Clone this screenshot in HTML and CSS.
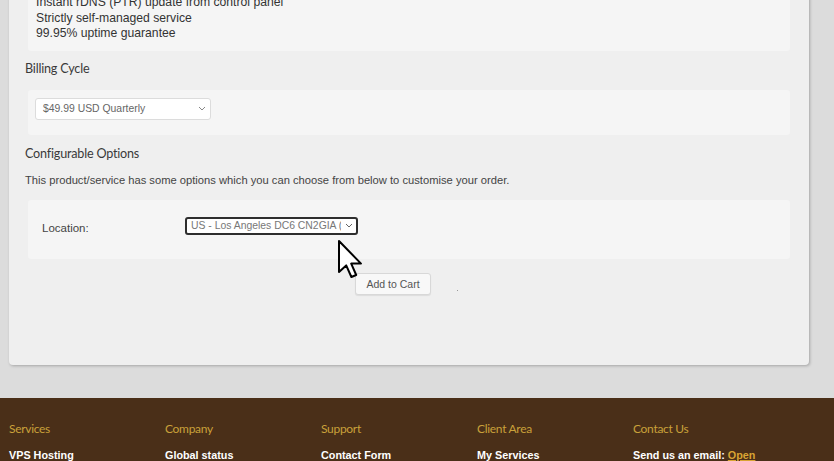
FILE: index.html
```html
<!DOCTYPE html>
<html lang="en">
<head>
    <meta charset="UTF-8">
    <meta name="viewport" content="width=device-width, initial-scale=1.0">
    <title>Configure</title>
    <link rel="stylesheet" href="styles.css">
</head>
<body>
    <div class="panel">
        <div class="box features">
            <div>Instant rDNS (PTR) update from control panel</div>
            <div>Strictly self-managed service</div>
            <div>99.95% uptime guarantee</div>
        </div>

        <h3 class="section-title">Billing Cycle</h3>
        <div class="box billing">
            <div class="select select-billing">
                <span>$49.99 USD Quarterly</span>
                <svg class="chev" width="8" height="5" viewBox="0 0 8 5"><path d="M1 1 L4 4 L7 1" fill="none" stroke="#888" stroke-width="1"/></svg>
            </div>
        </div>

        <h3 class="section-title">Configurable Options</h3>
        <p class="desc">This product/service has some options which you can choose from below to customise your order.</p>
        <div class="box options">
            <label class="opt-label">Location:</label>
            <div class="select select-location">
                <span class="sel-text">US - Los Angeles DC6 CN2GIA (</span>
                <svg class="chev" width="8" height="5" viewBox="0 0 8 5"><path d="M1 1 L4 4 L7 1" fill="none" stroke="#666" stroke-width="1"/></svg>
            </div>
        </div>

        <div class="actions">
            <button class="btn">Add to Cart</button>
            <span class="dot"></span>
        </div>

        <svg class="cursor" width="28" height="40" viewBox="0 0 14 20">
            <path d="M1 1 L1 16.5 L4.6 13.2 L7.2 19 L9.6 18 L7.1 12.3 L12 12.3 Z" fill="#fff" stroke="#000" stroke-width="1" stroke-linejoin="round"/>
        </svg>
    </div>

    <div class="footer">
        <div class="col">
            <h4>Services</h4>
            <a href="#">VPS Hosting</a>
        </div>
        <div class="col">
            <h4>Company</h4>
            <a href="#">Global status</a>
        </div>
        <div class="col">
            <h4>Support</h4>
            <a href="#">Contact Form</a>
        </div>
        <div class="col">
            <h4>Client Area</h4>
            <a href="#">My Services</a>
        </div>
        <div class="col">
            <h4>Contact Us</h4>
            <span class="mail">Send us an email: <a href="#" class="open">Open</a></span>
        </div>
    </div>
</body>
</html>
```

FILE: styles.css
```css
body {
    margin: 0;
    background: #dcdcdc;
    font-family: "Liberation Sans", Arial, sans-serif;
    color: #333;
    overflow: hidden;
}
.panel {
    position: relative;
    width: 800px;
    margin: -5px 0 0 9px;
    padding: 0 19px 70px 19px;
    box-sizing: border-box;
    background: #efefef;
    border-radius: 0 0 4px 4px;
    box-shadow: 1px 1px 3px rgba(0, 0, 0, 0.25);
}
.box {
    background: #f5f5f5;
    border-radius: 3px;
}
.features {
    padding: 0 8px 9px 8px;
    font-size: 12.2px;
    line-height: 15.5px;
}
.section-title {
    margin: 0;
    margin-left: -3px;
    font-family: Lato, "Open Sans", sans-serif;
    font-weight: 400;
    font-size: 12.6px;
    letter-spacing: -0.2px;
    color: #3a3a3a;
}
.features + .section-title {
    padding: 10px 0 14px 0;
}
.billing {
    padding: 8px 7px 15px 7px;
}
.billing + .section-title {
    padding: 11px 0 13px 0;
}
.select {
    display: flex;
    align-items: center;
    justify-content: space-between;
    box-sizing: border-box;
    background: #fff;
    border-radius: 3px;
    white-space: nowrap;
    overflow: hidden;
}
.select-billing {
    width: 176px;
    height: 22px;
    border: 1px solid #dcdcdc;
    padding: 0 4px 0 7px;
    font-size: 10.4px;
    color: #666;
}
.desc {
    margin: 0 0 0 -3px;
    padding: 0 0 14px 0;
    font-size: 11.2px;
    color: #444;
}
.options {
    display: flex;
    align-items: flex-start;
    padding: 17px 14px 24px 14px;
}
.opt-label {
    width: 143px;
    padding-top: 5px;
    font-size: 11.5px;
    line-height: 13px;
    color: #444;
}
.select-location {
    width: 173px;
    height: 18px;
    border: 2px solid #2e2e2e;
    padding: 0 3px 0 4px;
    font-size: 10.4px;
    color: #777;
}
.sel-text {
    overflow: hidden;
    margin-right: 4px;
}
.chev {
    flex-shrink: 0;
}
.actions {
    display: flex;
    align-items: center;
    margin-top: 14px;
    padding-left: 327px;
}
.btn {
    width: 76px;
    height: 22px;
    padding: 0;
    background: #f8f8f8;
    border: 1px solid #d8d8d8;
    border-radius: 3px;
    box-shadow: 0 1px 1px rgba(0, 0, 0, 0.08);
    font-family: "Liberation Sans", Arial, sans-serif;
    font-size: 10.5px;
    color: #555;
}
.dot {
    width: 1px;
    height: 1px;
    margin: 14px 0 0 26px;
    background: #999;
}
.cursor {
    position: absolute;
    left: 328px;
    top: 244px;
}
.footer {
    display: flex;
    margin-top: 33px;
    padding: 23px 0 0 9px;
    height: 60px;
    background: #4a2f18;
}
.col {
    width: 156px;
}
.col h4 {
    margin: 0 0 9px 0;
    font-family: Lato, "Open Sans", sans-serif;
    font-weight: 400;
    font-size: 12px;
    letter-spacing: -0.3px;
    color: #c9a13a;
}
.col a, .mail {
    font-size: 10.8px;
    font-weight: bold;
    color: #fff;
    text-decoration: none;
}
.col a.open {
    color: #d9a433;
    text-decoration: underline;
}
```
